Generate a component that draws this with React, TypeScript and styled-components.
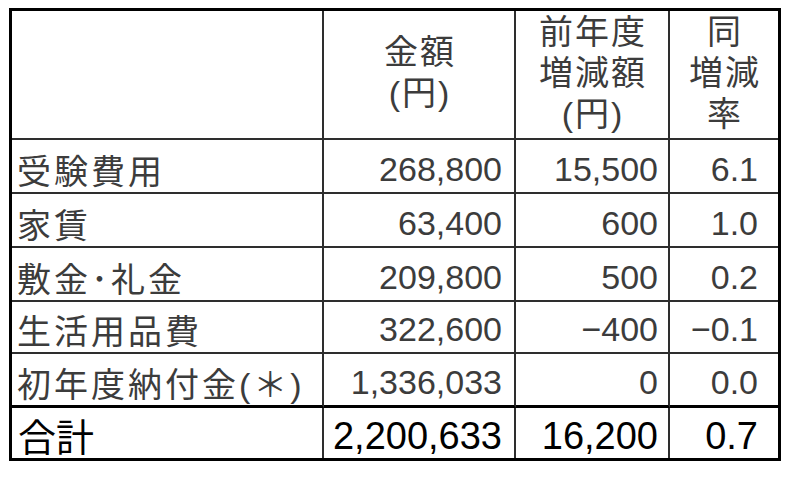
import React from "react";
import styled, { createGlobalStyle } from "styled-components";

const GlobalStyle = createGlobalStyle`
  html, body {
    margin: 0;
    padding: 0;
    background: #ffffff;
  }
  body {
    font-family: "Liberation Sans", "Noto Sans CJK JP", sans-serif;
  }
`;

const Page = styled.div`
  padding: 8px 0 0 9px;
`;

const Table = styled.div`
  display: grid;
  grid-template-columns: 312px 192px 154px 108px;
  grid-template-rows: 129px 54px 54px 54px 52px 54px 50px;
  width: 772px;
  box-sizing: border-box;
  border: 3px solid #000;
  background: #fff;
`;

type CellProps = { $last?: boolean; $thickBottom?: boolean; $noBottom?: boolean };

const Cell = styled.div<CellProps>`
  box-sizing: border-box;
  border-right: ${(p) => (p.$last ? "none" : "2px solid #2e2e2e")};
  border-bottom: ${(p) =>
    p.$noBottom ? "none" : p.$thickBottom ? "3px solid #000" : "2px solid #2e2e2e"};
  display: flex;
  font-family: "Liberation Sans", "Noto Sans CJK JP", sans-serif;
  white-space: nowrap;
`;

const HeadCell = styled(Cell)`
  flex-direction: column;
  align-items: center;
  justify-content: center;
  padding-bottom: 3px;
  font-size: 34px;
  letter-spacing: 2px;
  line-height: 41px;
  color: #3c3c3c;
`;

const HeadLine = styled.span`
  display: block;
  margin-right: -2px;
`;

const LabelCell = styled(Cell)<{ $total?: boolean }>`
  align-items: flex-end;
  line-height: 1;
  padding: ${(p) => (p.$total ? "0 0 1px 6px" : "0 0 3px 5px")};
  font-size: ${(p) => (p.$total ? "38px" : "34px")};
  letter-spacing: ${(p) => (p.$total ? "0px" : "3px")};
  color: ${(p) => (p.$total ? "#000" : "#3c3c3c")};
`;

const NumCell = styled(Cell)<{ $total?: boolean; $pr: number }>`
  align-items: flex-end;
  justify-content: flex-end;
  line-height: 1;
  padding: 0 ${(p) => p.$pr}px ${(p) => (p.$total ? "3px" : "6px")} 0;
  font-size: ${(p) => (p.$total ? "38px" : "34px")};
  color: ${(p) => (p.$total ? "#000" : "#3c3c3c")};
`;

type Row = { label: string; amount: string; diff: string; rate: string };

const rows: Row[] = [
  { label: "受験費用", amount: "268,800", diff: "15,500", rate: "6.1" },
  { label: "家賃", amount: "63,400", diff: "600", rate: "1.0" },
  { label: "敷金･礼金", amount: "209,800", diff: "500", rate: "0.2" },
  { label: "生活用品費", amount: "322,600", diff: "−400", rate: "−0.1" },
  { label: "初年度納付金(＊)", amount: "1,336,033", diff: "0", rate: "0.0" },
];

export default function App() {
  return (
    <>
      <GlobalStyle />
      <Page>
        <Table>
          <HeadCell />
          <HeadCell>
            <HeadLine>金額</HeadLine>
            <HeadLine>(円)</HeadLine>
          </HeadCell>
          <HeadCell>
            <HeadLine>前年度</HeadLine>
            <HeadLine>増減額</HeadLine>
            <HeadLine>(円)</HeadLine>
          </HeadCell>
          <HeadCell $last>
            <HeadLine>同</HeadLine>
            <HeadLine>増減</HeadLine>
            <HeadLine>率</HeadLine>
          </HeadCell>
          {rows.map((r, i) => {
            const thick = i === rows.length - 1;
            return (
              <React.Fragment key={r.label}>
                <LabelCell $thickBottom={thick}>{r.label}</LabelCell>
                <NumCell $thickBottom={thick} $pr={12}>{r.amount}</NumCell>
                <NumCell $thickBottom={thick} $pr={10}>{r.diff}</NumCell>
                <NumCell $thickBottom={thick} $pr={20} $last>{r.rate}</NumCell>
              </React.Fragment>
            );
          })}
          <LabelCell $total $noBottom>合計</LabelCell>
          <NumCell $total $noBottom $pr={12}>2,200,633</NumCell>
          <NumCell $total $noBottom $pr={10}>16,200</NumCell>
          <NumCell $total $noBottom $pr={20} $last>0.7</NumCell>
        </Table>
      </Page>
    </>
  );
}
